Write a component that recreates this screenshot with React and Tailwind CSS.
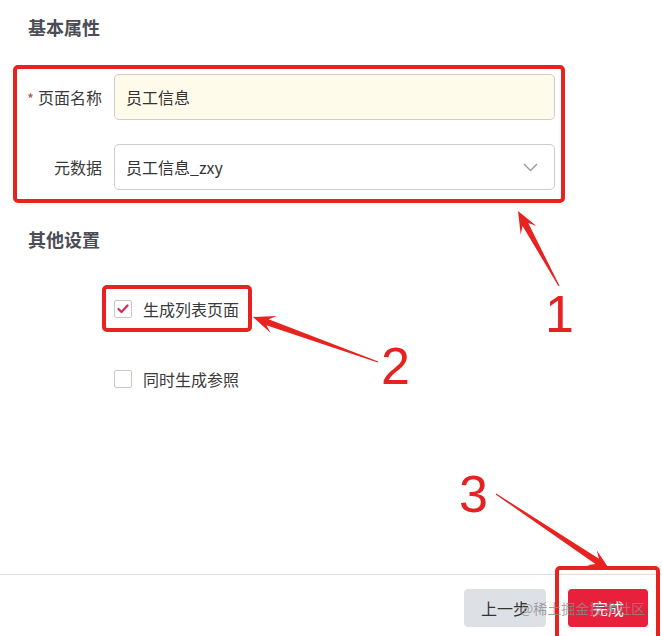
import React from 'react';

const RED = '#e8231f';

// tapered annotation arrow, tail -> tip
const arrowPoints = (x1, y1, x2, y2, head = 22, hw = 9, sw = 3.2, tw = 0.6) => {
    const dx = x2 - x1;
    const dy = y2 - y1;
    const len = Math.sqrt(dx * dx + dy * dy);
    const ux = dx / len;
    const uy = dy / len;
    const px = -uy;
    const py = ux;
    const bx = x2 - ux * head;
    const by = y2 - uy * head;
    const nx = x2 - ux * head * 0.7;
    const ny = y2 - uy * head * 0.7;
    const pts = [
        [x1 + px * tw, y1 + py * tw],
        [nx + px * sw, ny + py * sw],
        [bx + px * hw, by + py * hw],
        [x2, y2],
        [bx - px * hw, by - py * hw],
        [nx - px * sw, ny - py * sw],
        [x1 - px * tw, y1 - py * tw],
    ];
    return pts.map((p) => p[0].toFixed(1) + ',' + p[1].toFixed(1)).join(' ');
};

const Checkbox = ({ checked }) => (
    <span className="w-[18px] h-[18px] shrink-0 rounded-[2px] border border-[#c9c9c9] bg-white flex items-center justify-center">
        {checked && (
            <svg width="12" height="10" viewBox="0 0 12 10">
                <polyline points="1.5,5 4.5,8 10.5,1.5" fill="none" stroke="#d22d4b" strokeWidth="2.2" strokeLinecap="round" strokeLinejoin="round" />
            </svg>
        )}
    </span>
);

const App = () => {
    return (
        <div
            className="relative w-[662px] h-[636px] bg-white overflow-hidden flex flex-col"
            style={{ fontFamily: '"Noto Sans CJK SC", "Noto Sans", sans-serif' }}
        >
            <div className="flex-1 pt-[15px]">
                <h2 className="pl-[28px] text-[18px] leading-[24px] font-bold text-[#4a4d55]">基本属性</h2>

                <div className="mt-[26px] ml-[13px] w-[552px] border-4 border-[#e8231f] rounded-[5px] pt-[5px] pb-[9px] pr-[6px] flex flex-col gap-[24px]">
                    <div className="flex items-center gap-[12px]">
                        <label className="w-[85px] text-right text-[16px] text-[#3a3a3a] flex items-center justify-end">
                            <span className="text-[15px] leading-none text-[#c0504d] mr-[4px] mt-[2px]">*</span>页面名称
                        </label>
                        <div className="flex-1 h-[46px] rounded-[5px] border border-[#cdcdcd] bg-[#fffbea] flex items-center pl-[11px] text-[16px] text-[#333]">
                            员工信息
                        </div>
                    </div>
                    <div className="flex items-center gap-[12px]">
                        <label className="w-[85px] text-right text-[16px] text-[#3a3a3a]">元数据</label>
                        <div className="flex-1 h-[46px] rounded-[5px] border border-[#cdcdcd] bg-white flex items-center justify-between pl-[11px] pr-[16px] text-[16px] text-[#333]">
                            <span>员工信息_zxy</span>
                            <svg width="15" height="9" viewBox="0 0 15 9">
                                <polyline points="1,1 7.5,7.5 14,1" fill="none" stroke="#9a9a9a" strokeWidth="1.4" />
                            </svg>
                        </div>
                    </div>
                </div>

                <h2 className="mt-[24px] pl-[28px] text-[18px] leading-[24px] font-bold text-[#4a4d55]">其他设置</h2>

                <div className="mt-[34px] ml-[102px] w-[150px] h-[47px] border-4 border-[#e8231f] rounded-[5px] flex items-center pl-[8px] gap-[11px]">
                    <Checkbox checked />
                    <span className="text-[16px] text-[#3a3a3a]">生成列表页面</span>
                </div>

                <div className="mt-[38px] ml-[114px] h-[18px] flex items-center gap-[11px]">
                    <Checkbox />
                    <span className="text-[16px] text-[#3a3a3a]">同时生成参照</span>
                </div>
            </div>

            <div className="h-[62px] border-t border-[#dcdcdc] flex justify-end items-start pt-[14px] pr-[14px] gap-[22px]">
                <button className="w-[82px] h-[38px] rounded-[4px] bg-[#dde1e6] text-[16px] text-[#333]">上一步</button>
                <button className="w-[80px] h-[38px] rounded-[4px] bg-[#e8203b] text-[16px] text-white">完成</button>
            </div>

            {/* annotations */}
            <div className="absolute left-[555px] top-[566px] w-[105px] h-[76px] border-4 border-[#e8231f] rounded-[5px] pointer-events-none" />

            <svg className="absolute left-0 top-0 pointer-events-none" width="662" height="636">
                <polygon points={arrowPoints(559, 286, 518, 211)} fill={RED} />
                <polygon points={arrowPoints(378, 362, 253, 317)} fill={RED} />
                <polygon points={arrowPoints(496, 494, 610, 570)} fill={RED} />
            </svg>

            <span className="absolute left-[545px] top-[288px] text-[52px] leading-none text-[#e42222]" style={{ fontFamily: '"Liberation Sans", sans-serif' }}>1</span>
            <span className="absolute left-[381px] top-[340px] text-[52px] leading-none text-[#e42222]" style={{ fontFamily: '"Liberation Sans", sans-serif' }}>2</span>
            <span className="absolute left-[459px] top-[468px] text-[52px] leading-none text-[#e42222]" style={{ fontFamily: '"Liberation Sans", sans-serif' }}>3</span>

            <span className="absolute left-[520px] top-[598px] text-[14px] leading-[20px] text-[#8c8c8c]/80 pointer-events-none">@稀土掘金技术社区</span>
        </div>
    );
};

export default App;
